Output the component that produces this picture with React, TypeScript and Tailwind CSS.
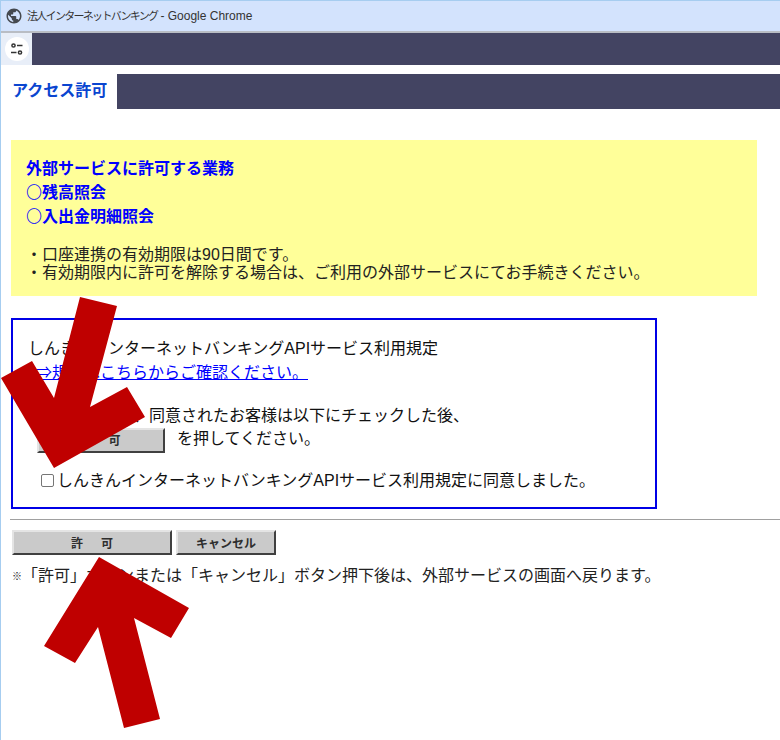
import React from 'react';

const FONT = "font-['Liberation_Sans','Noto_Sans_CJK_JP',sans-serif]";

const BevelButton = ({ label, className }: { label: string; className: string }) => (
  <button
    className={`h-[25px] bg-[#cacaca] border-2 border-t-[#e4e4e4] border-l-[#e4e4e4] border-r-[#404040] border-b-[#404040] text-[12px] font-bold text-[#2e2e2e] leading-none pt-[2px] ${className}`}
  >
    {label}
  </button>
);

const Arrows = () => (
  <svg className="absolute left-0 top-0 pointer-events-none" width="780" height="740">
    <polygon
      fill="#bf0000"
      points="79,297 116,306 89,407 126,387 144,417 53,468 0,378 31,361 53,398"
    />
    <polygon
      fill="#bf0000"
      points="98,557 188,608 170,638 133,618 159,719 123,728 97,627 74,663 43,646"
    />
  </svg>
);

const CircleRow = ({ label }: { label: string }) => (
  <div className="h-[24px] flex items-center">
    <span className="font-['Noto_Sans_CJK_JP',sans-serif] font-light pb-[4px]">〇</span>
    <span>{label}</span>
  </div>
);

export default function App() {
  return (
    <div className={`relative w-[780px] h-[740px] overflow-hidden bg-white border-l border-l-[#a6cdf0] text-[16px] text-[#222] ${FONT}`}>
      {/* window title */}
      <div className="h-[31px] bg-[#d3e3fd] border-t border-t-[#a6cdf0] flex items-center pl-[4px] gap-[4px]">
        <svg width="18" height="18" viewBox="0 0 24 24" fill="#45494f">
          <path d="M12 2C6.48 2 2 6.48 2 12s4.48 10 10 10 10-4.48 10-10S17.52 2 12 2zm-1 17.93c-3.95-.49-7-3.85-7-7.93 0-.62.08-1.21.21-1.79L9 15v1c0 1.1.9 2 2 2v1.93zm6.9-2.54c-.26-.81-1-1.39-1.9-1.39h-1v-3c0-.55-.45-1-1-1H8v-2h2c.55 0 1-.45 1-1V7h2c1.1 0 2-.9 2-2v-.41c2.93 1.19 5 4.06 5 7.41 0 2.08-.8 3.97-2.1 5.39z" />
        </svg>
        <span className="text-[12px] text-[#333] whitespace-nowrap">
          <span className="text-[11px] tracking-[-1.7px]">法人インターネットバンキング</span>
          <span className="ml-[3px]">- Google Chrome</span>
        </span>
      </div>
      <div className="h-[2px] bg-[#b9bdc4]" />

      {/* address bar */}
      <div className="h-[32px] flex bg-[#434462]">
        <div className="w-[31px] bg-[#e8eef8] flex items-center justify-center">
          <div className="w-[24px] h-[24px] rounded-full bg-white flex items-center justify-center">
            <svg width="14" height="14" viewBox="0 0 14 14" fill="none" stroke="#333" strokeWidth="1.5">
              <circle cx="3.5" cy="3.5" r="1.6" />
              <path d="M7 3.5h5.5" />
              <path d="M1 10.5h5.5" />
              <circle cx="10" cy="10.5" r="1.6" />
            </svg>
          </div>
        </div>
      </div>

      {/* heading */}
      <div className="mt-[9px] h-[35px] flex">
        <div className="w-[116px] pl-[11px] pb-[2px] flex items-center text-[16px] font-bold text-[#0a45d0] whitespace-nowrap">
          アクセス許可
        </div>
        <div className="flex-1 bg-[#434462]" />
      </div>

      {/* notice */}
      <div className="mt-[31px] ml-[10px] w-[746px] h-[156px] bg-[#ffff99] pl-[15px] pt-[17px]">
        <div className="font-bold text-[#0000ff] leading-[24px]">
          <div>外部サービスに許可する業務</div>
          <CircleRow label="残高照会" />
          <CircleRow label="入出金明細照会" />
        </div>
        <div className="mt-[17px] leading-[18px]">
          <div>・口座連携の有効期限は90日間です。</div>
          <div>・有効期限内に許可を解除する場合は、ご利用の外部サービスにてお手続きください。</div>
        </div>
      </div>

      {/* terms */}
      <div className="mt-[22px] ml-[10px] w-[646px] h-[191px] border-2 border-[#0000e6] pl-[15px] pt-[17px] text-[#111]">
        <div className="leading-[24px]">しんきんインターネットバンキングAPIサービス利用規定</div>
        <div className="leading-[24px]">
          <a className="ml-[8px] text-[#0000ff] underline" href="#">⇒規定はこちらからご確認ください。</a>
        </div>
        <div className="mt-[19px] pl-[9px] leading-[24px]">規定を確認し、同意されたお客様は以下にチェックした後、</div>
        <div className="flex items-center h-[24px] pl-[9px]">
          <BevelButton label="許　可" className="w-[128px] h-[22px] tracking-[3px]" />
          <span className="ml-[12px] pb-[2px]">を押してください。</span>
        </div>
        <label className="mt-[17px] ml-[13px] flex items-center leading-[24px]">
          <span className="w-[13px] h-[13px] border border-[#767676] rounded-[2px] bg-white mr-[3px] mb-[1px]" />
          しんきんインターネットバンキングAPIサービス利用規定に同意しました。
        </label>
      </div>

      <div className="mt-[10px] ml-[9px] h-px bg-[#a0a0a0]" />

      {/* actions */}
      <div className="mt-[10px] ml-[11px] flex gap-[4px]">
        <BevelButton label="許　可" className="w-[160px] tracking-[3px] pl-[3px]" />
        <BevelButton label="キャンセル" className="w-[100px]" />
      </div>
      <div className="mt-[9px] ml-[11px] leading-[24px] flex">
        <span className="w-[10px] text-[10px] leading-[26px]">※</span>
        <span>「許可」ボタンまたは「キャンセル」ボタン押下後は、外部サービスの画面へ戻ります。</span>
      </div>

      <Arrows />
    </div>
  );
}
